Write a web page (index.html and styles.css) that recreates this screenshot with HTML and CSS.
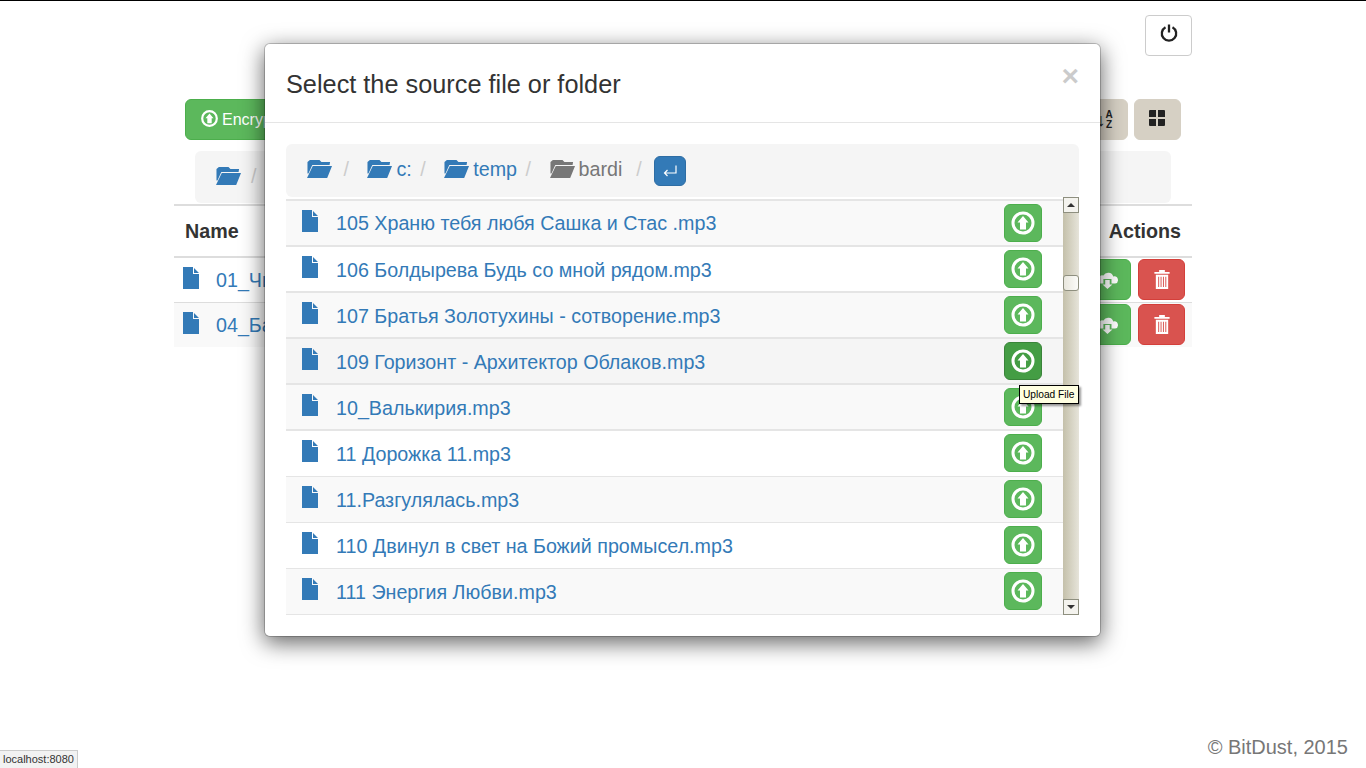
FILE: index.html
```html
<!DOCTYPE html>
<html lang="en">
  <head>
    <meta charset="UTF-8" />
    <meta name="viewport" content="width=device-width, initial-scale=1.0" />
    <title>BitDust</title>
    <link rel="stylesheet" href="styles.css">
  </head>
  <body>
    <svg class="sprites" width="0" height="0">
      <symbol id="folder" viewBox="0 0 26 18" preserveAspectRatio="none">
        <path d="M3 0H13L15 2H24L23.5 5H5.5L1.5 13.5L0.5 13.5V2Z" />
        <path d="M6 6H26L21 18H0Z" />
      </symbol>
      <symbol id="file" viewBox="0 0 16 22">
        <path d="M0 0H10V7H16V22H0ZM11 1L16 6H11Z" />
      </symbol>
      <symbol id="upload" viewBox="0 0 26 26">
        <circle cx="13" cy="13" r="10" fill="none" stroke="currentColor" stroke-width="3" />
        <path d="M13 6L18.5 12.5H16V19.5H10V12.5H7.5Z" fill="currentColor" />
      </symbol>
      <symbol id="trash" viewBox="0 0 16 20">
        <path d="M5 0H11V2H16V4H0V2H5ZM1.5 5H14.5V20H1.5ZM4 7V18H5V7ZM6.5 7V18H7.5V7ZM9 7V18H10V7ZM11.5 7V18H12.5V7Z" />
      </symbol>
      <symbol id="cloud" viewBox="0 0 24 20">
        <path d="M6 14H3A3 3 0 0 1 2.5 8A4 4 0 0 1 8 5A6 6 0 0 1 19 6A4 4 0 0 1 21 14H17V9H8V14Z" />
        <path d="M10 10H15V15H18L12.5 20L7 15H10Z" />
      </symbol>
    </svg>

    <div class="container">
      <div class="top-bar">
        <button class="btn btn-power">
          <svg class="icon-power" viewBox="0 0 18 18"><path d="M5.5 3.2A7.2 7.2 0 1 0 12.5 3.2M9 0.5V8.5" /></svg>
        </button>
      </div>

      <div class="toolbar">
        <button class="btn btn-success btn-encrypt">
          <svg class="icon-small"><use href="#upload" /></svg>
          Encrypt and upload
        </button>
        <div class="toolbar-right">
          <button class="btn btn-tan"><span class="sort-icon">↓<span class="sort-letters">A<br>Z</span></span></button>
          <button class="btn btn-tan">
            <svg class="icon-grid" viewBox="0 0 16 16"><path d="M0 1Q0 0 1 0H7V7H0ZM9 0H15Q16 0 16 1V7H9ZM0 9H7V16H1Q0 16 0 15ZM9 9H16V15Q16 16 15 16H9Z" /></svg>
          </button>
        </div>
      </div>

      <div class="crumbs crumbs-page">
        <svg class="icon-folder"><use href="#folder" /></svg>
        <span class="slash">/</span>
      </div>

      <table class="backups">
        <thead>
          <tr>
            <th>Name</th>
            <th class="col-actions">Actions</th>
          </tr>
        </thead>
        <tbody>
          <tr>
            <td>
              <svg class="icon-file"><use href="#file" /></svg>
              <a class="link">01_Чистое</a>
            </td>
            <td class="col-actions">
              <button class="btn btn-success btn-row"><svg class="icon-cloud"><use href="#cloud" /></svg></button>
              <button class="btn btn-danger btn-row"><svg class="icon-trash"><use href="#trash" /></svg></button>
            </td>
          </tr>
          <tr class="striped">
            <td>
              <svg class="icon-file"><use href="#file" /></svg>
              <a class="link">04_Баллада</a>
            </td>
            <td class="col-actions">
              <button class="btn btn-success btn-row"><svg class="icon-cloud"><use href="#cloud" /></svg></button>
              <button class="btn btn-danger btn-row"><svg class="icon-trash"><use href="#trash" /></svg></button>
            </td>
          </tr>
        </tbody>
      </table>
    </div>

    <footer class="copyright">© BitDust, 2015</footer>

    <div class="modal">
      <div class="modal-header">
        <h4 class="modal-title">Select the source file or folder</h4>
        <span class="close">×</span>
      </div>
      <div class="modal-body">
        <div class="crumbs crumbs-modal">
          <svg class="icon-folder root-folder"><use href="#folder" /></svg>
          <span class="slash">/</span>
          <span class="crumb"><svg class="icon-folder"><use href="#folder" /></svg><a class="link">c:</a></span>
          <span class="slash">/</span>
          <span class="crumb"><svg class="icon-folder"><use href="#folder" /></svg><a class="link">temp</a></span>
          <span class="slash">/</span>
          <span class="crumb current"><svg class="icon-folder"><use href="#folder" /></svg><span>bardi</span></span>
          <span class="slash slash-last">/</span>
          <button class="btn btn-enter">
            <svg class="icon-enter" viewBox="0 0 14 12"><path d="M13 0.5V8H1.5M4.5 5L1.5 8L4.5 11" /></svg>
          </button>
        </div>

        <div class="file-list">
          <div class="files">
            <div class="file-row">
              <svg class="icon-file"><use href="#file" /></svg>
              <a class="link">105 Храню тебя любя Сашка и Стас .mp3</a>
              <button class="btn btn-success btn-upload"><svg class="icon-upload"><use href="#upload" /></svg></button>
            </div>
            <div class="file-row">
              <svg class="icon-file"><use href="#file" /></svg>
              <a class="link">106 Болдырева Будь со мной рядом.mp3</a>
              <button class="btn btn-success btn-upload"><svg class="icon-upload"><use href="#upload" /></svg></button>
            </div>
            <div class="file-row">
              <svg class="icon-file"><use href="#file" /></svg>
              <a class="link">107 Братья Золотухины - сотворение.mp3</a>
              <button class="btn btn-success btn-upload"><svg class="icon-upload"><use href="#upload" /></svg></button>
            </div>
            <div class="file-row hover">
              <svg class="icon-file"><use href="#file" /></svg>
              <a class="link">109 Горизонт - Архитектор Облаков.mp3</a>
              <button class="btn btn-success btn-upload"><svg class="icon-upload"><use href="#upload" /></svg></button>
            </div>
            <div class="file-row">
              <svg class="icon-file"><use href="#file" /></svg>
              <a class="link">10_Валькирия.mp3</a>
              <button class="btn btn-success btn-upload"><svg class="icon-upload"><use href="#upload" /></svg></button>
            </div>
            <div class="file-row">
              <svg class="icon-file"><use href="#file" /></svg>
              <a class="link">11 Дорожка 11.mp3</a>
              <button class="btn btn-success btn-upload"><svg class="icon-upload"><use href="#upload" /></svg></button>
            </div>
            <div class="file-row">
              <svg class="icon-file"><use href="#file" /></svg>
              <a class="link">11.Разгулялась.mp3</a>
              <button class="btn btn-success btn-upload"><svg class="icon-upload"><use href="#upload" /></svg></button>
            </div>
            <div class="file-row">
              <svg class="icon-file"><use href="#file" /></svg>
              <a class="link">110 Двинул в свет на Божий промысел.mp3</a>
              <button class="btn btn-success btn-upload"><svg class="icon-upload"><use href="#upload" /></svg></button>
            </div>
            <div class="file-row">
              <svg class="icon-file"><use href="#file" /></svg>
              <a class="link">111 Энергия Любви.mp3</a>
              <button class="btn btn-success btn-upload"><svg class="icon-upload"><use href="#upload" /></svg></button>
            </div>
          </div>

          <div class="scrollbar">
            <div class="scroll-btn"><span class="arrow-up"></span></div>
            <div class="scroll-track"><div class="scroll-thumb"></div></div>
            <div class="scroll-btn"><span class="arrow-down"></span></div>
          </div>
        </div>
      </div>
    </div>

    <div class="tooltip">Upload File</div>
    <div class="status-bar">localhost:8080</div>
  </body>
</html>
```

FILE: styles.css
```css
* {
  box-sizing: border-box;
}

html,
body {
  height: 100%;
}

body {
  margin: 0;
  padding: 0;
  border-top: 1px solid #000;
  background-color: #fff;
  color: #333;
  font-family: "Liberation Sans", Arial, sans-serif;
  font-size: 19.7px;
  line-height: 1.42857;
  display: flex;
  flex-direction: column;
  overflow: hidden;
}

.sprites {
  position: absolute;
}

.container {
  width: 1018px;
  margin: 0 auto;
}

.link {
  color: #337ab7;
}

/* buttons */
.btn {
  display: inline-flex;
  align-items: center;
  justify-content: center;
  padding: 0;
  border: 1px solid transparent;
  border-radius: 6px;
  font-family: inherit;
  color: #fff;
}

.btn-success {
  background-color: #5cb85c;
  border-color: #4cae4c;
}

.btn-danger {
  background-color: #d9534f;
  border-color: #d43f3a;
}

.btn-tan {
  width: 47px;
  height: 41px;
  background-color: #d6d0c4;
  border-color: #d6d0c4;
  color: #222;
}

/* top of the page */
.top-bar {
  display: flex;
  justify-content: flex-end;
  padding-top: 14px;
}

.btn-power {
  width: 47px;
  height: 41px;
  background: #fff;
  border-color: #ccc;
  border-radius: 4px;
}

.icon-power {
  width: 18px;
  height: 18px;
  fill: none;
  stroke: #222;
  stroke-width: 2.3;
  margin-bottom: 6px;
}

.toolbar {
  display: flex;
  justify-content: space-between;
  margin-top: 43px;
  padding: 0 11px;
}

.toolbar-right {
  display: flex;
  gap: 6px;
}

.btn-encrypt {
  width: 220px;
  height: 41px;
  justify-content: flex-start;
  padding-left: 14px;
  gap: 3px;
  font-size: 16px;
}

.icon-small {
  width: 19px;
  height: 19px;
  margin-bottom: 3px;
}

.sort-icon {
  display: flex;
  align-items: center;
  font-size: 18px;
  line-height: 1;
}

.sort-letters {
  font-size: 10px;
  line-height: 1;
  font-weight: bold;
}

.icon-grid {
  width: 16px;
  height: 16px;
  margin: 0 2px 4px 0;
  fill: #222;
}

/* breadcrumbs */
.crumbs {
  display: flex;
  align-items: center;
  background-color: #f5f5f5;
  border-radius: 6px;
}

.crumbs-page {
  height: 52px;
  margin: 11px 21px 0;
  padding-left: 21px;
}

.crumbs-page .icon-folder {
  margin-bottom: 3px;
}

.crumbs-page .slash {
  margin: 0 0 1px 10px;
}

.crumbs-modal {
  height: 53px;
  padding-left: 21px;
}

.crumb {
  display: flex;
  align-items: center;
  margin-bottom: 3px;
}

.crumb .icon-folder {
  margin-right: 4px;
}

.current {
  color: #777;
}

.current .icon-folder {
  fill: #777;
}

.slash {
  color: #ccc;
}

.crumbs-modal .slash {
  margin: 0 18.5px 3px 8.5px;
}

.crumbs-modal .root-folder {
  margin: 0 3px 3px 0;
}

.crumbs-modal .slash-last {
  margin: 0 12px 3px 14px;
}

.icon-folder {
  width: 25px;
  height: 18px;
  fill: #337ab7;
}

.btn-enter {
  width: 32px;
  height: 30px;
  margin-top: 1px;
  background-color: #337ab7;
  border-color: #2e6da4;
}

.icon-enter {
  width: 14px;
  height: 12px;
  fill: none;
  stroke: #fff;
  stroke-width: 1.2;
}

/* page table */
.backups {
  width: 100%;
  margin-top: 1px;
  border-collapse: collapse;
}

.backups th {
  height: 52px;
  padding: 1px 11px 0;
  text-align: left;
  border-top: 2px solid #ddd;
  border-bottom: 2px solid #ddd;
}

.backups td {
  height: 45px;
  padding: 0 7px 0 9px;
  border-top: 1px solid #ddd;
}

.backups .col-actions {
  text-align: right;
}

.backups th.col-actions {
  padding-right: 11px;
}

.backups td .icon-file {
  margin-right: 11.5px;
  vertical-align: -2px;
}

.striped td {
  background-color: #f9f9f9;
}

.btn-row {
  width: 47px;
  height: 41px;
  margin-left: 2px;
  vertical-align: middle;
}

.icon-cloud {
  width: 22px;
  height: 18px;
  fill: #fff;
}

.icon-trash {
  width: 16px;
  height: 19px;
  fill: #fff;
}

.icon-file {
  width: 16px;
  height: 22px;
  fill: #337ab7;
  flex-shrink: 0;
}

/* modal */
.modal {
  position: absolute;
  top: 43px;
  left: 264px;
  width: 837px;
  height: 594px;
  background-color: #fff;
  background-clip: padding-box;
  border: 1px solid rgba(0, 0, 0, 0.2);
  border-radius: 6px;
  box-shadow: 0 6px 22px rgba(0, 0, 0, 0.6);
}

.modal-header {
  display: flex;
  justify-content: space-between;
  height: 79px;
  padding: 22px 21px 0;
  border-bottom: 1px solid #e5e5e5;
}

.modal-title {
  margin: 0;
  font-size: 25.3px;
  font-weight: normal;
  line-height: 1.42857;
}

.close {
  margin: -11px 0 0;
  color: #000;
  opacity: 0.2;
  font-size: 30px;
  font-weight: bold;
  line-height: 1.42857;
}

.modal-body {
  padding: 21px 21px 0;
}

.file-list {
  display: flex;
  height: 418px;
}

.files {
  flex: 1;
  margin-top: 2px;
  border-top: 2px solid #e5e5e5;
}

.file-row {
  display: flex;
  align-items: center;
  height: 46px;
  padding: 0 21px 0 16px;
  border-bottom: 1px solid #e5e5e5;
  background-color: #f9f9f9;
}

.file-row:nth-child(2n) {
  background-color: #fff;
}

.file-row.hover {
  background-color: #f5f5f5;
}

.file-row .icon-file {
  margin: -4px 18px 0 0;
}

.file-row .link {
  flex: 1;
  padding-top: 1px;
}

.btn-upload {
  width: 38px;
  height: 38px;
}

.file-row:nth-child(-n+5) {
  border-bottom-width: 2px;
}

.file-row:nth-child(n+2):nth-child(-n+5) .link {
  padding-top: 3px;
}

.file-row:nth-child(n+6) .icon-file {
  margin-top: -5px;
}

.file-row:nth-child(n+6) .btn-upload {
  margin-bottom: 1px;
}

.icon-upload {
  width: 26px;
  height: 26px;
}

.hover .btn-upload {
  background-color: #449d44;
  border-color: #398439;
}

/* classic scrollbar */
.scrollbar {
  display: flex;
  flex-direction: column;
  width: 16px;
}

.scroll-btn {
  display: flex;
  align-items: center;
  justify-content: center;
  height: 16px;
  background-color: #f4f3ee;
  border: 1px solid #8e8f7f;
}

.arrow-up,
.arrow-down {
  border-left: 4px solid transparent;
  border-right: 4px solid transparent;
}

.arrow-up {
  border-bottom: 4px solid #333;
}

.arrow-down {
  border-top: 4px solid #333;
}

.scroll-track {
  flex: 1;
  padding-top: 62px;
  background: linear-gradient(to right, #c4c0aa, #e6e4da);
}

.scroll-thumb {
  height: 16px;
  background: linear-gradient(to right, #e9e7de, #fbfbf8);
  border: 1px solid #8e8f7f;
  border-radius: 3px;
}

/* small overlays */
.tooltip {
  position: absolute;
  top: 385px;
  left: 1019px;
  padding: 1px 3px;
  background-color: #ffffe1;
  border: 1px solid #000;
  box-shadow: 2px 2px 2px rgba(0, 0, 0, 0.4);
  color: #000;
  font-family: "Liberation Sans", Arial, sans-serif;
  font-size: 10.2px;
  line-height: 15px;
}

.status-bar {
  position: absolute;
  left: 0;
  bottom: 0;
  height: 18px;
  padding: 1px 3px;
  background-color: #f2f2f2;
  border: 1px solid #ccc;
  border-left: 0;
  border-bottom: 0;
  color: #333;
  font-size: 11px;
  line-height: 15px;
}

.copyright {
  margin-top: auto;
  padding: 0 18px 6px 0;
  text-align: right;
  color: #777;
  font-size: 20px;
}
```
